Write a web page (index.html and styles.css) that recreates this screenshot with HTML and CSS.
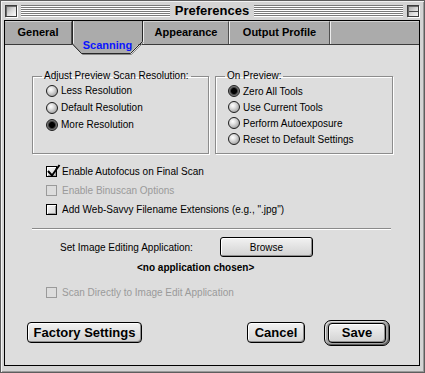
FILE: index.html
```html
<!DOCTYPE html>
<html>
<head>
<meta charset="UTF-8">
<meta name="viewport" content="width=device-width, initial-scale=1.0">
<link rel="stylesheet" href="styles.css">
</head>
<body>

<div class="window">
  <div class="titlebar">
    <span class="close-box"></span>
    <span class="stripes"></span>
    <span class="title">Preferences</span>
    <span class="stripes"></span>
    <span class="shade-box"></span>
  </div>

  <div class="frame">
    <div class="tabs">
      <div class="tab tab-general">General</div>
      <div class="tab tab-scanning current">
        <svg class="tab-shape" width="72" height="36" viewBox="0 0 72 36">
          <polygon points="0,0 0,23 9,32 58,32 70,20 70,0" fill="#ababab"/>
          <polyline points="1.5,24.5 10.5,33.5 59.5,33.5 71.5,21.5" fill="none" stroke="#8a8a8a" stroke-width="1"/>
          <polyline points="0.5,0 0.5,23 9.5,32.5 58.5,32.5 70.5,20.5 70.5,0" fill="none" stroke="#262626" stroke-width="1"/>
          <polyline points="1.5,0 1.5,22.5" fill="none" stroke="#e8e8e8" stroke-width="1"/>
        </svg>
        <span class="tab-label">Scanning</span>
      </div>
      <div class="tab tab-appearance">Appearance</div>
      <div class="tab tab-output">Output Profile</div>
      <div class="tab tab-rest"></div>
    </div>

    <div class="pane">
      <div class="groups">
        <fieldset class="group group-resolution">
          <legend>Adjust Preview Scan Resolution:</legend>
          <div class="radio-row"><span class="radio"></span>Less Resolution</div>
          <div class="radio-row"><span class="radio"></span>Default Resolution</div>
          <div class="radio-row"><span class="radio on"></span>More Resolution</div>
        </fieldset>
        <fieldset class="group group-preview">
          <legend>On Preview:</legend>
          <div class="radio-row"><span class="radio on"></span>Zero All Tools</div>
          <div class="radio-row"><span class="radio"></span>Use Current Tools</div>
          <div class="radio-row"><span class="radio"></span>Perform Autoexposure</div>
          <div class="radio-row"><span class="radio"></span>Reset to Default Settings</div>
        </fieldset>
      </div>

      <div class="checks">
        <div class="check-row">
          <span class="checkbox">
            <svg class="checkmark" width="16" height="14" viewBox="0 0 16 14"><path d="M2 7 L6 11.5 L13.5 1" fill="none" stroke="#000" stroke-width="2"/></svg>
          </span>Enable Autofocus on Final Scan
        </div>
        <div class="check-row disabled"><span class="checkbox"></span>Enable Binuscan Options</div>
        <div class="check-row"><span class="checkbox"></span>Add Web-Savvy Filename Extensions (e.g., ".jpg")</div>
      </div>

      <div class="separator"></div>

      <div class="app-row">
        <span class="app-label">Set Image Editing Application:</span>
        <span class="btn btn-browse">Browse</span>
      </div>
      <div class="app-chosen">&lt;no application chosen&gt;</div>

      <div class="check-row disabled scan-direct"><span class="checkbox"></span>Scan Directly to Image Edit Application</div>

      <div class="footer">
        <span class="btn btn-factory">Factory Settings</span>
        <span class="btn btn-cancel">Cancel</span>
        <span class="default-ring"><span class="btn btn-save">Save</span></span>
      </div>
    </div>
  </div>
</div>

</body>
</html>
```

FILE: styles.css
```css
body{
margin: 0;
background-color: #4848b0;
font-family: "Liberation Sans", Arial, sans-serif;
font-size: 10px;
color: #000;
}

.window{
width: 425px;
height: 373px;
box-sizing: border-box;
background-color: #d4d4d4;
border: 1px solid #5e5e5e;
box-shadow: inset 1px 1px 0 #f2f2f2, inset -1px -1px 0 #9a9a9a;
}

/* title bar */
.titlebar{
display: flex;
align-items: flex-start;
height: 19px;
padding-top: 4px;
box-sizing: border-box;
}

.close-box, .shade-box{
width: 12px;
height: 12px;
box-sizing: border-box;
border: 1px solid #3c3c3c;
background: linear-gradient(135deg, #9a9a9a 0%, #d8d8d8 50%, #ffffff 100%);
box-shadow: inset 1px 1px 0 #6a6a6a, 1px 1px 0 #fff;
flex: none;
}

.close-box{ margin-left: 4px; }

.shade-box{
margin-right: 5px;
background: linear-gradient(#4a4a4a, #4a4a4a) center / 100% 1px no-repeat,
            linear-gradient(135deg, #a4a4a4 0%, #dcdcdc 60%, #f4f4f4 100%);
}

.stripes{
flex: 1;
height: 12px;
margin: 0 4px;
background: repeating-linear-gradient(to bottom, #7a7a7a 0 1px, #ffffff 1px 2px);
}

.title{
font-size: 13px;
font-weight: bold;
line-height: 15px;
padding: 0 1px;
margin-top: -2px;
}

/* content frame */
.frame{
margin: 0 4px 0 3px;
height: 346px;
box-sizing: border-box;
border: 1px solid #000;
background-color: #dddddd;
}

.tabs{
display: flex;
height: 24px;
box-sizing: border-box;
background-color: #ababab;
border-bottom: 1px solid #3a3a3a;
}

.tab{
height: 23px;
box-sizing: border-box;
border-top: 1px solid #d0d0d0;
border-left: 1px solid #ececec;
border-right: 1px solid #505050;
font-size: 11px;
font-weight: bold;
line-height: 21px;
text-align: center;
}

.tab-general{ width: 67px; border-left: none; }
.tab-appearance{ width: 86px; }
.tab-output{ width: 101px; }
.tab-rest{ flex: 1; border-right: none; }

.tab.current{
position: relative;
width: 71px;
border: none;
}

.tab-shape{
position: absolute;
left: 0;
top: 0;
overflow: visible;
z-index: 1;
}

.tab-label{
position: relative;
z-index: 2;
display: block;
padding-top: 18px;
line-height: 13px;
color: #0a14ff;
}

/* pane */
.pane{
padding: 25px 25px 0 27px;
}

.groups{
display: flex;
gap: 6px;
}

.group{
margin: 0;
height: 84px;
box-sizing: border-box;
border: 1px solid #8c8c8c;
box-shadow: 1px 1px 0 #fff, inset 1px 1px 0 #fff;
min-width: 0;
}

.group legend{
padding: 0 2px;
line-height: 12px;
}

.group-resolution{
width: 177px;
padding: 0 0 0 13px;
}

.group-resolution legend{ margin-left: -4px; }
.group-resolution .radio-row{ height: 17px; }

.group-preview{
width: 178px;
padding: 1px 0 0 12px;
}

.group-preview legend{ margin-left: -3px; }
.group-preview .radio-row{ height: 16px; }

.radio-row{
display: flex;
align-items: center;
white-space: nowrap;
}

.radio{
width: 12px;
height: 12px;
box-sizing: border-box;
border-radius: 50%;
border: 1px solid #1e1e1e;
background: radial-gradient(circle at 38% 35%, #ffffff 0, #e2e2e2 30%, #a8a8a8 75%, #7c7c7c 100%);
margin-right: 3px;
flex: none;
}

.radio.on{
background: radial-gradient(circle at 50% 50%, #000 0 2.6px, #2e2e2e 3.2px, #7a7a7a 4.6px, #9c9c9c 100%);
}

/* checkboxes */
.checks{
margin-top: 8px;
padding-left: 14px;
}

.check-row{
display: flex;
align-items: center;
height: 19px;
white-space: nowrap;
}

.checkbox{
position: relative;
width: 11px;
height: 11px;
box-sizing: border-box;
border: 1px solid #000;
background: linear-gradient(135deg, #f6f6f6, #d6d6d6);
box-shadow: inset 1px 1px 0 #fff, inset -1px -1px 0 #a0a0a0;
margin-right: 5px;
flex: none;
}

.checkmark{
position: absolute;
left: -1px;
top: -3px;
overflow: visible;
}

.check-row.disabled{
color: #9a9a9a;
}

.check-row.disabled .checkbox{
border-color: #9a9a9a;
background: #dddddd;
box-shadow: none;
}

.separator{
margin-top: 9px;
width: 359px;
border-top: 1px solid #8a8a8a;
border-bottom: 1px solid #ffffff;
}

.app-row{
display: flex;
align-items: center;
margin-top: 7px;
height: 20px;
}

.app-label{
width: 160px;
margin-left: 28px;
}

.btn{
display: flex;
align-items: center;
justify-content: center;
box-sizing: border-box;
border: 1px solid #000;
border-radius: 4px;
background: linear-gradient(#f2f2f2, #d2d2d2);
box-shadow: inset 1px 1px 0 #fff, inset -1px -1px 0 #8e8e8e;
white-space: nowrap;
}

.btn-browse{
width: 93px;
height: 20px;
border-radius: 3px;
}

.app-chosen{
margin-top: 5px;
padding-left: 105px;
line-height: 12px;
font-weight: bold;
}

.scan-direct{
margin-top: 9px;
padding-left: 14px;
}

.footer{
display: flex;
align-items: center;
margin-top: 18px;
margin-left: -5px;
height: 25px;
}

.footer .btn{
font-size: 13px;
font-weight: bold;
}

.btn-factory{
width: 115px;
height: 21px;
}

.btn-cancel{
margin-left: auto;
width: 58px;
height: 21px;
}

.default-ring{
display: flex;
margin-left: 19px;
margin-right: 4px;
width: 66px;
height: 26px;
box-sizing: border-box;
padding: 2px 3px;
border: 1px solid #000;
border-radius: 7px;
background-color: #a4a4a4;
box-shadow: inset 1px 1px 0 #e0e0e0, inset -1px -1px 0 #5c5c5c;
}

.btn-save{
width: 58px;
height: 20px;
}
```
